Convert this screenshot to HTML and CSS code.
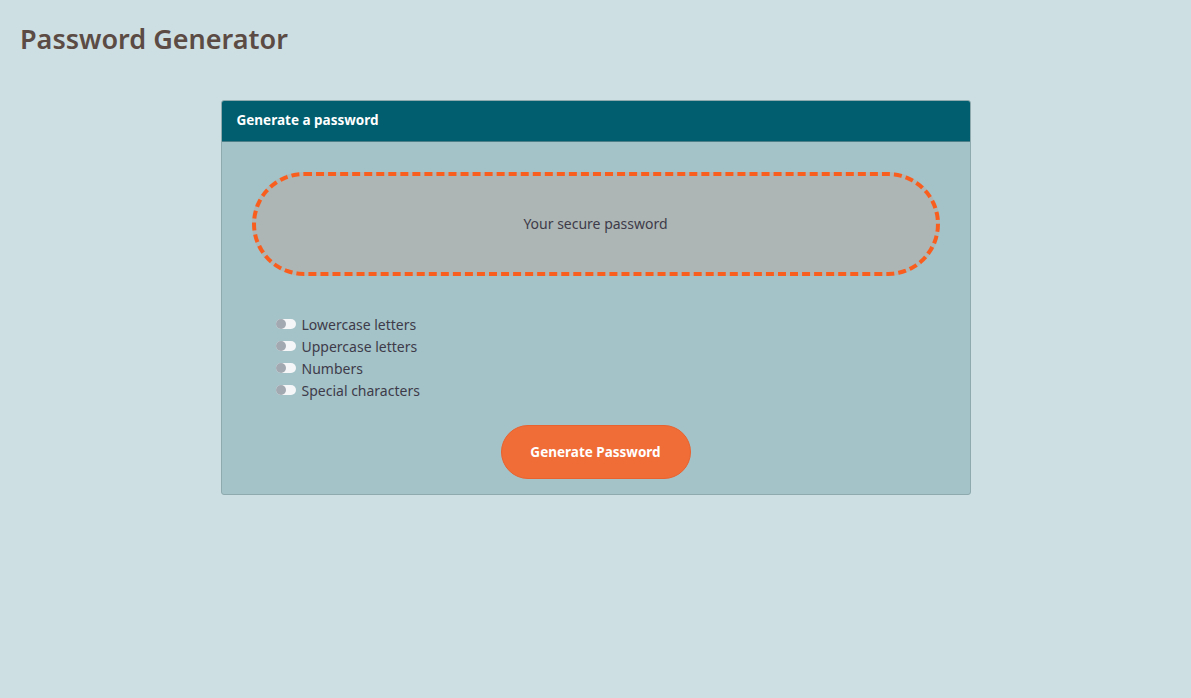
FILE: index.html
```html
<!DOCTYPE html>
<html lang="en">
<head>
<meta charset="utf-8">
<title>Password Generator</title>
<link rel="stylesheet" href="styles.css">
</head>
<body>
<header class="page-header">
  <h1 class="page-title">Password Generator</h1>
</header>
<main class="main">
  <section class="card">
    <div class="card-header">
      <h2 class="card-title">Generate a password</h2>
    </div>
    <div class="card-body">
      <div class="password-box">
        <span class="password-text">Your secure password</span>
      </div>
      <ul class="options">
        <li class="option"><span class="toggle"><span class="knob"></span></span><span class="option-label">Lowercase letters</span></li>
        <li class="option"><span class="toggle"><span class="knob"></span></span><span class="option-label">Uppercase letters</span></li>
        <li class="option"><span class="toggle"><span class="knob"></span></span><span class="option-label">Numbers</span></li>
        <li class="option"><span class="toggle"><span class="knob"></span></span><span class="option-label">Special characters</span></li>
      </ul>
      <div class="actions">
        <button class="generate-btn" type="button">Generate Password</button>
      </div>
    </div>
  </section>
</main>
</body>
</html>
```

FILE: styles.css
```css
* { box-sizing: border-box; }

html, body {
  margin: 0;
  padding: 0;
}

body {
  background: #cddfe3;
  font-family: "Noto Sans", "Open Sans", sans-serif;
  color: #3e3b4a;
  min-height: 698px;
}

.page-header {
  padding: 22px 20px 0;
}

.page-title {
  margin: 0;
  font-size: 27px;
  line-height: 34px;
  font-weight: 600;
  color: #5b4b44;
  letter-spacing: 0;
}

.main {
  display: flex;
  justify-content: center;
  padding-top: 44px;
}

.card {
  width: 750px;
  border: 1px solid #8eaaae;
  border-radius: 3px;
  background: #a4c3c8;
  overflow: hidden;
}

.card-header {
  background: #005e6e;
  height: 41px;
  display: flex;
  align-items: center;
  padding: 0 15px 3px;
  border-bottom: 1px solid #4c7f88;
}

.card-title {
  margin: 0;
  font-size: 13.5px;
  font-weight: 700;
  color: #ffffff;
}

.card-body {
  padding: 30px 30px 15px;
}

.password-box {
  height: 104px;
  border: 4px dashed #fa5e1f;
  border-radius: 52px;
  background: #adb6b4;
  display: flex;
  align-items: center;
  justify-content: center;
  padding-bottom: 2px;
}

.password-text {
  font-size: 14px;
  color: #3e3b4a;
}

.options {
  list-style: none;
  margin: 0;
  padding: 37px 0 0 24px;
}

.option {
  display: flex;
  align-items: center;
  height: 22px;
  font-size: 14px;
}

.toggle {
  position: relative;
  width: 20px;
  height: 10px;
  border-radius: 5px;
  background: #f5f6f7;
  margin-right: 6px;
  flex: none;
}

.knob {
  position: absolute;
  left: 0;
  top: 0;
  width: 10px;
  height: 10px;
  border-radius: 50%;
  background: #a3a9b1;
}

.option-label {
  color: #3e3b4a;
}

.actions {
  display: flex;
  justify-content: center;
  padding-top: 24px;
}

.generate-btn {
  width: 190px;
  height: 54px;
  border: 1px solid #e8622f;
  border-radius: 27px;
  background: #f06d38;
  color: #ffffff;
  font-family: inherit;
  font-size: 13.5px;
  font-weight: 700;
  cursor: pointer;
}
```
